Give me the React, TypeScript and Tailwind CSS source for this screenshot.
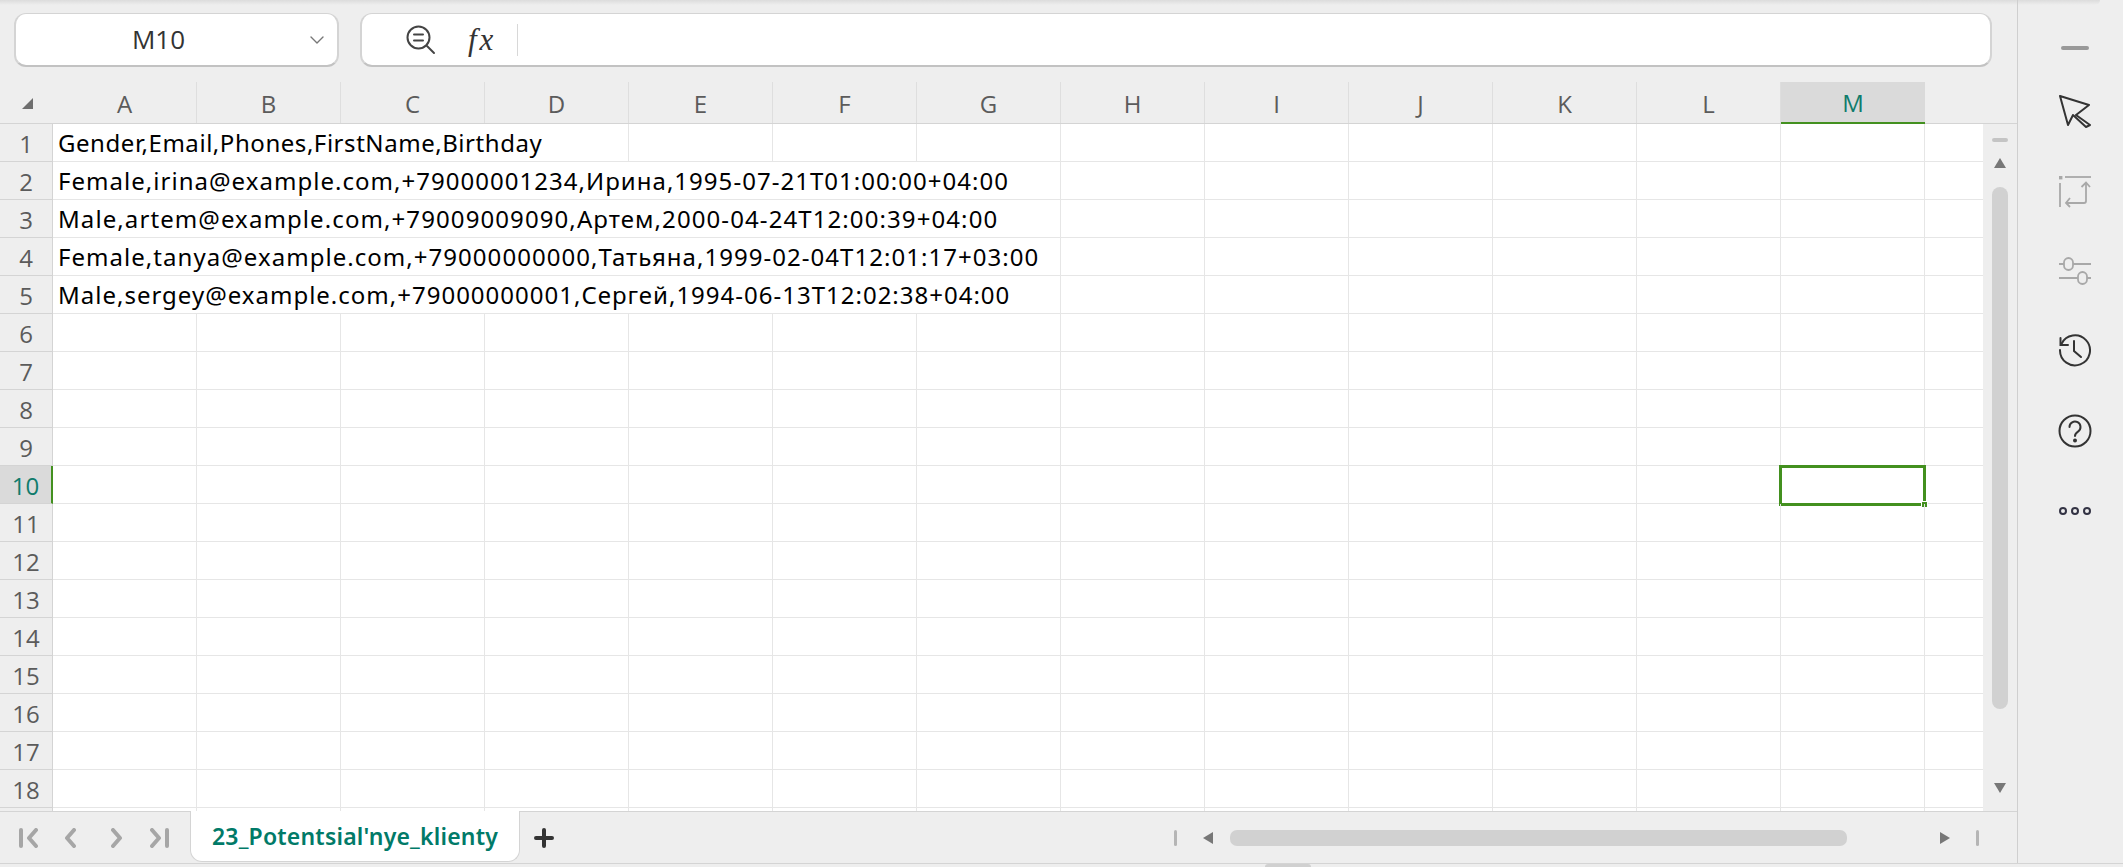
import { useMemo } from "react";
import { ChevronDown } from "lucide-react";

const GRID_FONT = "font-['Noto_Sans',sans-serif]";
const UI_FONT = "font-['Open_Sans','Noto_Sans',sans-serif]";

const COLUMNS = ["A", "B", "C", "D", "E", "F", "G", "H", "I", "J", "K", "L", "M"];

// text rows spill over neighbouring cells, so span says how many columns the text covers
const DATA: Record<number, { text: string; span: number; tracking: string }> = {
  1: { text: "Gender,Email,Phones,FirstName,Birthday", span: 4, tracking: "tracking-[0.55px]" },
  2: { text: "Female,irina@example.com,+79000001234,Ирина,1995-07-21T01:00:00+04:00", span: 7, tracking: "tracking-[1.03px]" },
  3: { text: "Male,artem@example.com,+79009009090,Артем,2000-04-24T12:00:39+04:00", span: 7, tracking: "tracking-[1.09px]" },
  4: { text: "Female,tanya@example.com,+79000000000,Татьяна,1999-02-04T12:01:17+03:00", span: 7, tracking: "tracking-[1.04px]" },
  5: { text: "Male,sergey@example.com,+79000000001,Сергей,1994-06-13T12:02:38+04:00", span: 7, tracking: "tracking-[1px]" },
};

function Row({ n }: { n: number }) {
  const data = DATA[n];
  const active = n === 10;
  const blanks = useMemo(() => {
    const used = data ? data.span : 0;
    return COLUMNS.slice(used);
  }, [data]);

  return (
    <div className="flex h-[38px] shrink-0">
      <div
        className={`w-[53px] shrink-0 flex items-center justify-center pt-[2px] border-b text-[24px] leading-none ${UI_FONT} ${
          active
            ? "bg-[#dadada] text-[#107c6c] border-[#d4d4d4] border-r-[2px] border-r-[#43901f]"
            : "bg-[#eeeeee] text-[#5b5b5b] border-[#d4d4d4] border-r"
        }`}
      >
        {n < 19 && n}
      </div>
      {data && (
        <div
          className={`h-full border-b border-r border-[#e6e6e6] pl-[5px] flex items-center whitespace-nowrap text-[24px] leading-none text-black ${data.tracking} ${GRID_FONT}`}
          style={{ width: data.span * 144 }}
        >
          {data.text}
        </div>
      )}
      {blanks.map((c) => (
        <div key={c} className="relative w-[144px] shrink-0 border-b border-r border-[#e6e6e6]">
          {active && c === "M" && (
            <div className="absolute -left-[2px] -top-[1px] w-[147px] h-[41px] border-[3px] border-[#43901f]">
              <div className="absolute left-[139px] top-[33px] w-[7px] h-[7px] bg-[#43901f] border border-white" />
            </div>
          )}
        </div>
      ))}
      <div className="flex-1 border-b border-[#e6e6e6]" />
    </div>
  );
}

function GridHeader() {
  return (
    <div className="flex h-[42px] shrink-0 border-b border-[#d4d4d4] bg-[#eeeeee]">
      <div className="w-[53px] shrink-0 flex items-center justify-center">
        <svg width="14" height="14" viewBox="0 0 14 14">
          <path d="M13 2 L13 13 L2 13 Z" fill="#6e6e6e" />
        </svg>
      </div>
      {COLUMNS.map((c) =>
        c === "M" ? (
          <div
            key={c}
            className={`w-[144px] shrink-0 h-[42px] flex items-center justify-center pt-[2px] bg-[#dadada] border-b-2 border-[#43901f] text-[#107c6c] text-[24px] ${UI_FONT}`}
          >
            {c}
          </div>
        ) : (
          <div
            key={c}
            className={`w-[144px] shrink-0 flex items-center justify-center pt-[2px] border-r border-[#dedede] text-[#5b5b5b] text-[24px] ${UI_FONT}`}
          >
            {c}
          </div>
        ),
      )}
    </div>
  );
}

function VerticalScrollbar() {
  return (
    <div className="w-[34px] shrink-0 bg-[#eeeeee] flex flex-col items-center pt-[14px] border-t border-[#d4d4d4] -mt-px">
      <div className="w-[16px] h-[4px] rounded-full bg-[#c4c4c4]" />
      <svg className="mt-[16px]" width="12" height="10" viewBox="0 0 12 10">
        <path d="M6 0 L12 10 L0 10 Z" fill="#777777" />
      </svg>
      <div className="mt-[19px] w-[16px] h-[522px] rounded-full bg-[#d1d1d1]" />
      <svg className="mt-[74px]" width="12" height="10" viewBox="0 0 12 10">
        <path d="M0 0 L12 0 L6 10 Z" fill="#777777" />
      </svg>
    </div>
  );
}

function SheetNav() {
  return (
    <div className="w-[190px] shrink-0 flex items-center pl-[19px]">
      <svg width="19" height="20" viewBox="0 0 19 20" fill="none" stroke="#a6a6a6" strokeWidth="4" strokeLinecap="round" strokeLinejoin="round">
        <path d="M2 2v16" />
        <path d="M17 2 L10 10 L17 18" />
      </svg>
      <svg className="ml-[26px]" width="12" height="20" viewBox="0 0 12 20" fill="none" stroke="#a6a6a6" strokeWidth="4" strokeLinecap="round" strokeLinejoin="round">
        <path d="M10 2 L3 10 L10 18" />
      </svg>
      <svg className="ml-[35px]" width="12" height="20" viewBox="0 0 12 20" fill="none" stroke="#a6a6a6" strokeWidth="4" strokeLinecap="round" strokeLinejoin="round">
        <path d="M2 2 L9 10 L2 18" />
      </svg>
      <svg className="ml-[27px]" width="19" height="20" viewBox="0 0 19 20" fill="none" stroke="#a6a6a6" strokeWidth="4" strokeLinecap="round" strokeLinejoin="round">
        <path d="M2 2 L9 10 L2 18" />
        <path d="M17 2v16" />
      </svg>
    </div>
  );
}

function SheetBar() {
  return (
    <div className="h-[52px] shrink-0 flex border-t border-[#d4d4d4] bg-[#eeeeee]">
      <SheetNav />
      <div className="-mt-px w-[330px] h-[51px] shrink-0 bg-white rounded-b-[12px] border-x border-b border-[#d4d4d4] flex items-center justify-center">
        <span className={`text-[#017a68] text-[23px] tracking-[0.2px] font-semibold ${GRID_FONT}`}>23_Potentsial'nye_klienty</span>
      </div>
      <div className="ml-[14px] flex items-center">
        <svg width="20" height="20" viewBox="0 0 20 20" stroke="#333333" strokeWidth="4" strokeLinecap="round">
          <path d="M10 2v16M2 10h16" />
        </svg>
      </div>
      <div className="ml-auto w-[843px] shrink-0 flex items-center">
        <div className="w-[3px] h-[16px] rounded-full bg-[#b5b5b5]" />
        <svg className="ml-[26px]" width="10" height="12" viewBox="0 0 10 12">
          <path d="M10 0 V12 L0 6 Z" fill="#777777" />
        </svg>
        <div className="ml-[17px] w-[617px] h-[16px] rounded-[7px] bg-[#d1d1d1]" />
        <svg className="ml-[93px]" width="10" height="12" viewBox="0 0 10 12">
          <path d="M0 0 V12 L10 6 Z" fill="#777777" />
        </svg>
        <div className="ml-[26px] w-[3px] h-[16px] rounded-full bg-[#b5b5b5]" />
      </div>
    </div>
  );
}

function Sidebar() {
  return (
    <div className="w-[106px] shrink-0 border-l border-[#cfcfcf] bg-[#eeeeee] flex flex-col items-center pl-[8px]">
      <div className="mt-[46px] w-[28px] h-[4px] rounded-full bg-[#999999]" />
      <svg className="mt-[44px]" width="34" height="34" viewBox="0 0 34 34" fill="none" stroke="#333333" strokeWidth="2" strokeLinejoin="round">
        <path d="M2 2 L31 11 L18 21 L32 31 L28 33 L15 21 L10 31 Z" />
      </svg>
      <svg className="mt-[47px]" width="34" height="34" viewBox="0 0 34 34" fill="none" stroke="#a8a8a8" strokeWidth="1.8">
        <rect x="1" y="1" width="3.4" height="3.4" fill="#a8a8a8" stroke="none" />
        <path d="M2 8v24" />
        <path d="M7 2h26" />
        <path d="M28 8v18a2 2 0 0 1-2 2H8" />
        <path d="M23.5 12L28 7.5 32 12" />
        <path d="M12 23L8 28l4 4" />
      </svg>
      <svg className="mt-[48px]" width="34" height="28" viewBox="0 0 34 28" fill="none" stroke="#a8a8a8" strokeWidth="1.8">
        <path d="M1 7h5M15 7h18" />
        <rect x="6" y="1" width="9" height="12" rx="4.5" />
        <path d="M1 21h19M29 21h4" />
        <rect x="20" y="15" width="9" height="12" rx="4.5" />
      </svg>
      <svg className="mt-[48px]" width="34" height="34" viewBox="0 0 34 34" fill="none" stroke="#333333" strokeWidth="2" strokeLinecap="round">
        <path d="M3.4 11A15 15 0 1 1 2 17" />
        <path d="M2.5 5v7h7.5" />
        <path d="M16 8v10l7 6" />
      </svg>
      <svg className="mt-[47px]" width="34" height="34" viewBox="0 0 34 34" fill="none" stroke="#333333" strokeWidth="2" strokeLinecap="round">
        <circle cx="17" cy="17" r="15.5" />
        <path d="M11.5 13a5.5 5.5 0 1 1 8.5 4.6c-2 1.3-3 2.4-3 4.4" />
        <circle cx="17" cy="26.5" r="1" fill="#333333" />
      </svg>
      <svg className="mt-[59px]" width="34" height="8" viewBox="0 0 34 8" fill="none" stroke="#333344" strokeWidth="2">
        <circle cx="5" cy="4" r="3" />
        <circle cx="17" cy="4" r="3" />
        <circle cx="29" cy="4" r="3" />
      </svg>
    </div>
  );
}

function FormulaBar() {
  return (
    <div className="h-[82px] shrink-0 flex pl-[14px] pt-[13px] pb-[15px] gap-[21px] pr-[25px]">
      <div className="w-[325px] h-[54px] shrink-0 bg-white rounded-[12px] border-2 border-t border-[#d4d4d4] border-b-[#c2c2c2] flex items-center">
        <span className={`flex-1 text-center text-[26px] pr-[4px] text-[#333333] ${UI_FONT}`}>M10</span>
        <ChevronDown className="mr-[8px] text-[#777777]" size={24} strokeWidth={1.4} />
      </div>
      <div className="flex-1 h-[54px] bg-white rounded-[12px] border-2 border-t border-[#d4d4d4] border-b-[#c2c2c2] flex items-center pl-[44px]">
        <svg width="30" height="30" viewBox="0 0 30 30" fill="none" stroke="#444444" strokeWidth="2" strokeLinecap="round">
          <circle cx="12.5" cy="12.5" r="11" />
          <path d="M8 9.5h9M8 15.5h9" />
          <path d="M21 21l7 7" />
        </svg>
        <span className="ml-[32px] font-['Liberation_Serif',serif] italic text-[31px] tracking-[3px] leading-none text-[#333333]">fx</span>
        <div className="ml-[21px] w-px h-[32px] bg-[#d8d8d8]" />
      </div>
    </div>
  );
}

export default function App() {
  const rows = Array.from({ length: 19 }, (_, i) => i + 1);

  return (
    <div className="relative w-[2123px] h-[867px] flex flex-col overflow-hidden bg-[#eeeeee]">
      <div className="flex h-[863px] shrink-0 overflow-hidden">
        <div className="flex-1 min-w-0 flex flex-col">
          <FormulaBar />
          <GridHeader />
          <div className="flex-1 min-h-0 flex">
            <div className="flex-1 min-w-0 bg-white overflow-hidden flex flex-col">
              {rows.map((n) => (
                <Row key={n} n={n} />
              ))}
            </div>
            <VerticalScrollbar />
          </div>
          <SheetBar />
        </div>
        <Sidebar />
      </div>
      <div className="h-[1px] shrink-0 bg-[#d4d4d4]" />
      {/* window shadow along the top, and the grip below the status line */}
      <div className="absolute left-0 top-0 w-[2017px] h-[5px] bg-gradient-to-b from-[#dcdcdc] to-[#eeeeee]" />
      <div className="absolute left-[2018px] top-0 w-[82px] h-[5px] rounded-br-[6px] bg-gradient-to-b from-[#dcdcdc] to-[#eeeeee]" />
      <div className="absolute left-[1265px] top-[864px] w-[46px] h-[3px] rounded-t-[4px] bg-[#d0d0d0]" />
    </div>
  );
}
